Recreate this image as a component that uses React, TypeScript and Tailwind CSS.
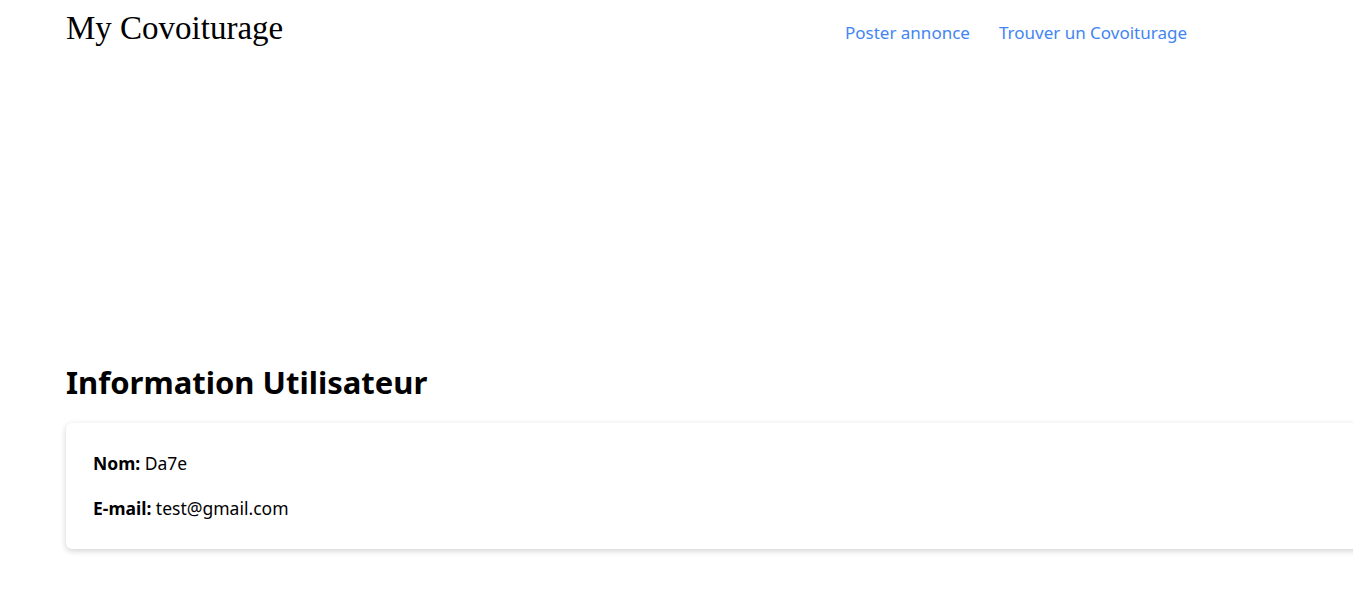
export default function App() {
  return (
    <div className="min-h-[601px] w-full overflow-hidden bg-white font-['Noto_Sans',sans-serif] text-black">
      <header className="flex items-start justify-between pl-[66px] pr-[166px] pt-[8px]">
        <span className="font-['Liberation_Serif',serif] text-[33px] leading-[40px]">
          My Covoiturage
        </span>
        <nav className="flex gap-[27px] pt-[14px] text-[17px] leading-[22px] text-[#4285f4]">
          <a href="#" className="pr-[2px]">Poster annonce</a>
          <a href="#">Trouver un Covoiturage</a>
        </nav>
      </header>

      <main className="pl-[66px] pt-[314px]">
        <h1 className="text-[31px] font-bold leading-[40px]">Information Utilisateur</h1>
        <div className="mt-[21px] w-[1320px] rounded-md bg-white px-[27px] pt-[28px] pb-[29px] shadow-[0_2px_6px_rgba(0,0,0,0.18)]">
          <p className="text-[17.5px] leading-[24px]">
            <b>Nom:</b> Da7e
          </p>
          <p className="mt-[21px] text-[17.5px] leading-[24px]">
            <b>E-mail:</b> test@gmail.com
          </p>
        </div>
      </main>
    </div>
  );
}
